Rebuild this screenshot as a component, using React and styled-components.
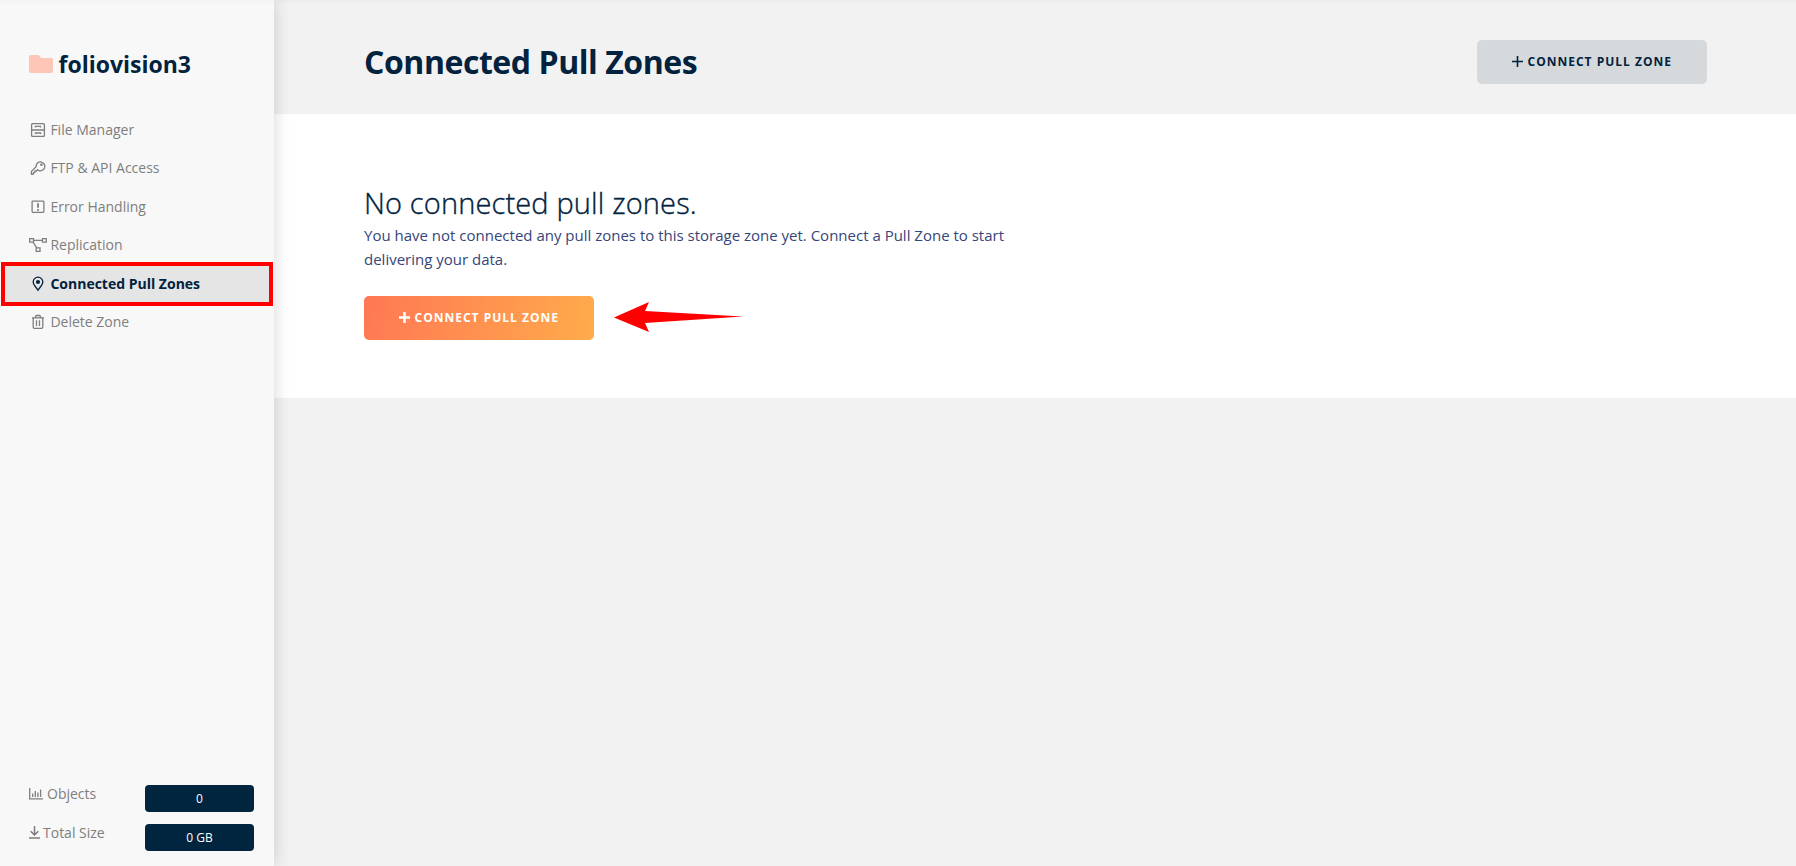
import React from 'react';
import styled, { createGlobalStyle } from 'styled-components';

const GlobalStyle = createGlobalStyle`
  * {
    box-sizing: border-box;
  }

  body {
    margin: 0;
    background-color: #f2f2f2;
    font-family: 'Open Sans', sans-serif;
    color: #02223e;
  }

  h1, h2, p, ul, dl, dd {
    margin: 0;
    padding: 0;
  }
`;

const Page = styled.div`
  display: grid;
  grid-template-columns: 274px 1fr;
  height: 100vh;
  overflow: hidden;
`;

const Sidebar = styled.aside`
  display: flex;
  flex-direction: column;
  background: linear-gradient(#f3f3f3, #f8f8f8 5px);
  box-shadow: 0 0 16px rgba(0, 0, 0, 0.17);
  z-index: 1;
`;

const ZoneName = styled.div`
  display: flex;
  align-items: center;
  gap: 5.5px;
  height: 110.8px;
  padding: 17px 0 0 29px;
  font-size: 23px;
  font-weight: 700;
`;

const Menu = styled.ul`
  flex: 1;
  list-style: none;
`;

const MenuItem = styled.li`
  display: flex;
  align-items: center;
  height: 38.45px;
  margin: 0 ${props => (props.$active ? '4px' : '0')};
  padding-left: ${props => (props.$active ? '25px' : '29px')};
  font-size: 14px;
  font-weight: ${props => (props.$active ? 700 : 400)};
  color: ${props => (props.$active ? '#02223e' : '#7e7e7e')};
  background-color: ${props => (props.$active ? '#e5e5e5' : 'transparent')};
  outline: ${props => (props.$active ? '4px solid #ff0000' : 'none')};
  outline-offset: -1px;

  svg {
    width: 18px;
    height: 16px;
    margin-right: 3.4px;
  }

  span {
    padding-bottom: 1px;
  }
`;

const Stats = styled.dl`
  display: grid;
  grid-template-columns: 116px 109px;
  grid-row-gap: 12px;
  padding: 0 0 15px 29px;
`;

const StatLabel = styled.dt`
  display: flex;
  align-items: center;
  gap: ${props => props.$gap};
  height: 17px;
  font-size: 14px;
  color: #7e7e7e;
`;

const StatValue = styled.dd`
  height: 27px;
  border-radius: 4px;
  background-color: #01243f;
  color: #fff;
  font-size: 12px;
  line-height: 27px;
  text-align: center;
`;

const Header = styled.header`
  display: flex;
  align-items: center;
  justify-content: space-between;
  height: 114px;
  padding: 0 89px 0 90px;
  background: linear-gradient(#ececec, #f2f2f2 5px);
`;

const Title = styled.h1`
  padding-top: 10px;
  font-size: 32px;
  font-weight: 700;
  line-height: 44px;
  letter-spacing: -0.45px;
`;

const Button = styled.button`
  display: flex;
  align-items: center;
  justify-content: center;
  gap: 4.5px;
  width: 230px;
  height: 44px;
  padding: 0 0 1px;
  border: none;
  border-radius: 5px;
  background: ${props => (props.$primary ? 'linear-gradient(100deg, #ff7854, #ffab4b)' : '#d5d9dc')};
  color: ${props => (props.$primary ? '#fff' : '#02223e')};
  font-family: inherit;
  font-size: 12px;
  font-weight: 700;
  letter-spacing: 1px;
  text-transform: uppercase;
  white-space: nowrap;
  cursor: pointer;
`;

const HeaderAction = styled.div`
  padding-top: 9px;
`;

const EmptyState = styled.section`
  height: 284px;
  padding: 69px 90px 0;
  background-color: #fff;
`;

const EmptyTitle = styled.h2`
  font-size: 29px;
  font-weight: 300;
  line-height: 40px;
  letter-spacing: 0.14px;
  -webkit-text-stroke: 0.35px #02223e;
`;

const EmptyText = styled.p`
  width: 660px;
  margin-bottom: 25px;
  font-size: 15px;
  line-height: 24px;
  color: #36457a;
`;

const ActionRow = styled.div`
  display: flex;
  align-items: flex-start;
  gap: 20px;
`;

const FolderIcon = () => (
  <svg width="24" height="18" viewBox="0 0 24 18">
    <path fill="#fdc6b7" d="M2 0h7.5l2.8 3H22a2 2 0 0 1 2 2v11a2 2 0 0 1-2 2H2a2 2 0 0 1-2-2V2a2 2 0 0 1 2-2z" />
  </svg>
);

const Icon = ({ children }) => (
  <svg viewBox="0 0 18 16" fill="none" stroke="currentColor" strokeWidth="1.3">
    {children}
  </svg>
);

const FilesIcon = () => (
  <Icon>
    <rect x="2.6" y="1.6" width="12.8" height="12.8" rx="1" />
    <path d="M2.6 8h12.8M6.4 5.4V4.4h5.2v1M6.4 12v-1h5.2v1" />
  </Icon>
);

const KeyIcon = () => (
  <Icon>
    <path d="M8.6 9.7 7.3 11H5.8v1.6H4.3v1.7H2.4v-2.9l4.7-4.7a4.4 4.4 0 1 1 1.5 3z" strokeLinejoin="round" />
    <circle cx="12.4" cy="4.7" r="0.6" />
  </Icon>
);

const ErrorIcon = () => (
  <Icon>
    <rect x="3.1" y="2.1" width="11.8" height="11.3" rx="0.8" />
    <path d="M9 4.3v4.5M9 10v1.7" strokeWidth="1.8" />
  </Icon>
);

const ReplicationIcon = () => (
  <Icon>
    <path d="M.7 1.7h3.8v3.5H.7zM13.5 1.7h3.8v3.5h-3.8zM7.2 10.8H11v3.5H7.2zM4.5 3.4h9M4 5.2l3.8 5.6" />
  </Icon>
);

const PinIcon = () => (
  <Icon>
    <path d="M9 14.2C8 12.3 4.2 9 4.2 6a4.8 4.8 0 0 1 9.6 0c0 3-3.8 6.3-4.8 8.2z" />
    <circle cx="9" cy="6" r="2.1" fill="currentColor" stroke="none" />
  </Icon>
);

const TrashIcon = () => (
  <Icon>
    <path d="M3 3.8h12M6.2 3.6l1-2.1h3.6l1 2.1M4.2 3.8V13q0 1.3 1.3 1.3h7q1.3 0 1.3-1.3V3.8M7.5 6.2V12M10.5 6.2V12" />
  </Icon>
);

const ChartIcon = () => (
  <svg width="14" height="12" viewBox="0 0 14 12" fill="none" stroke="currentColor" strokeWidth="1.3">
    <path d="M.7 0v10.8H14M3.7 9V5.5M6.3 9V3M8.9 9V4.5M11.6 9V1.5" />
  </svg>
);

const DownloadIcon = () => (
  <svg width="11" height="13" viewBox="0 0 11 13" fill="none" stroke="currentColor" strokeWidth="1.5">
    <path d="M5.5 0v9M1.6 5.2l3.9 3.7 3.9-3.7M0 11.9h11" />
  </svg>
);

const PlusIcon = ({ weight }) => (
  <svg width="11" height="11" viewBox="0 0 11 11" fill="none" stroke="currentColor" strokeWidth={weight}>
    <path d="M5.5 0v11M0 5.5h11" />
  </svg>
);

const Arrow = styled.svg`
  width: 130px;
  height: 30px;
  margin-top: 6px;
`;

const menu = [
  { label: 'File Manager', icon: FilesIcon },
  { label: 'FTP & API Access', icon: KeyIcon },
  { label: 'Error Handling', icon: ErrorIcon },
  { label: 'Replication', icon: ReplicationIcon },
  { label: 'Connected Pull Zones', icon: PinIcon, active: true },
  { label: 'Delete Zone', icon: TrashIcon }
];

export default function App() {
  return (
    <Page>
      <GlobalStyle />
      <Sidebar>
        <ZoneName>
          <FolderIcon />
          foliovision3
        </ZoneName>
        <Menu>
          {menu.map(({ label, icon: ItemIcon, active }) => (
            <MenuItem key={label} $active={active}>
              <ItemIcon />
              <span>{label}</span>
            </MenuItem>
          ))}
        </Menu>
        <Stats>
          <StatLabel $gap="4px">
            <ChartIcon />
            Objects
          </StatLabel>
          <StatValue>0</StatValue>
          <StatLabel $gap="3px">
            <DownloadIcon />
            Total Size
          </StatLabel>
          <StatValue>0 GB</StatValue>
        </Stats>
      </Sidebar>

      <main>
        <Header>
          <Title>Connected Pull Zones</Title>
          <HeaderAction>
            <Button>
              <PlusIcon weight="1.6" />
              Connect Pull Zone
            </Button>
          </HeaderAction>
        </Header>
        <EmptyState>
          <EmptyTitle>No connected pull zones.</EmptyTitle>
          <EmptyText>
            You have not connected any pull zones to this storage zone yet. Connect a Pull Zone to start delivering
            your data.
          </EmptyText>
          <ActionRow>
            <Button $primary>
              <PlusIcon weight="2.5" />
              Connect Pull Zone
            </Button>
            <Arrow viewBox="0 0 130 30">
              <path fill="#ff0000" d="M0 15.5 35 0l-4 9 98 5.5L31 21l4 9z" />
            </Arrow>
          </ActionRow>
        </EmptyState>
      </main>
    </Page>
  );
}
